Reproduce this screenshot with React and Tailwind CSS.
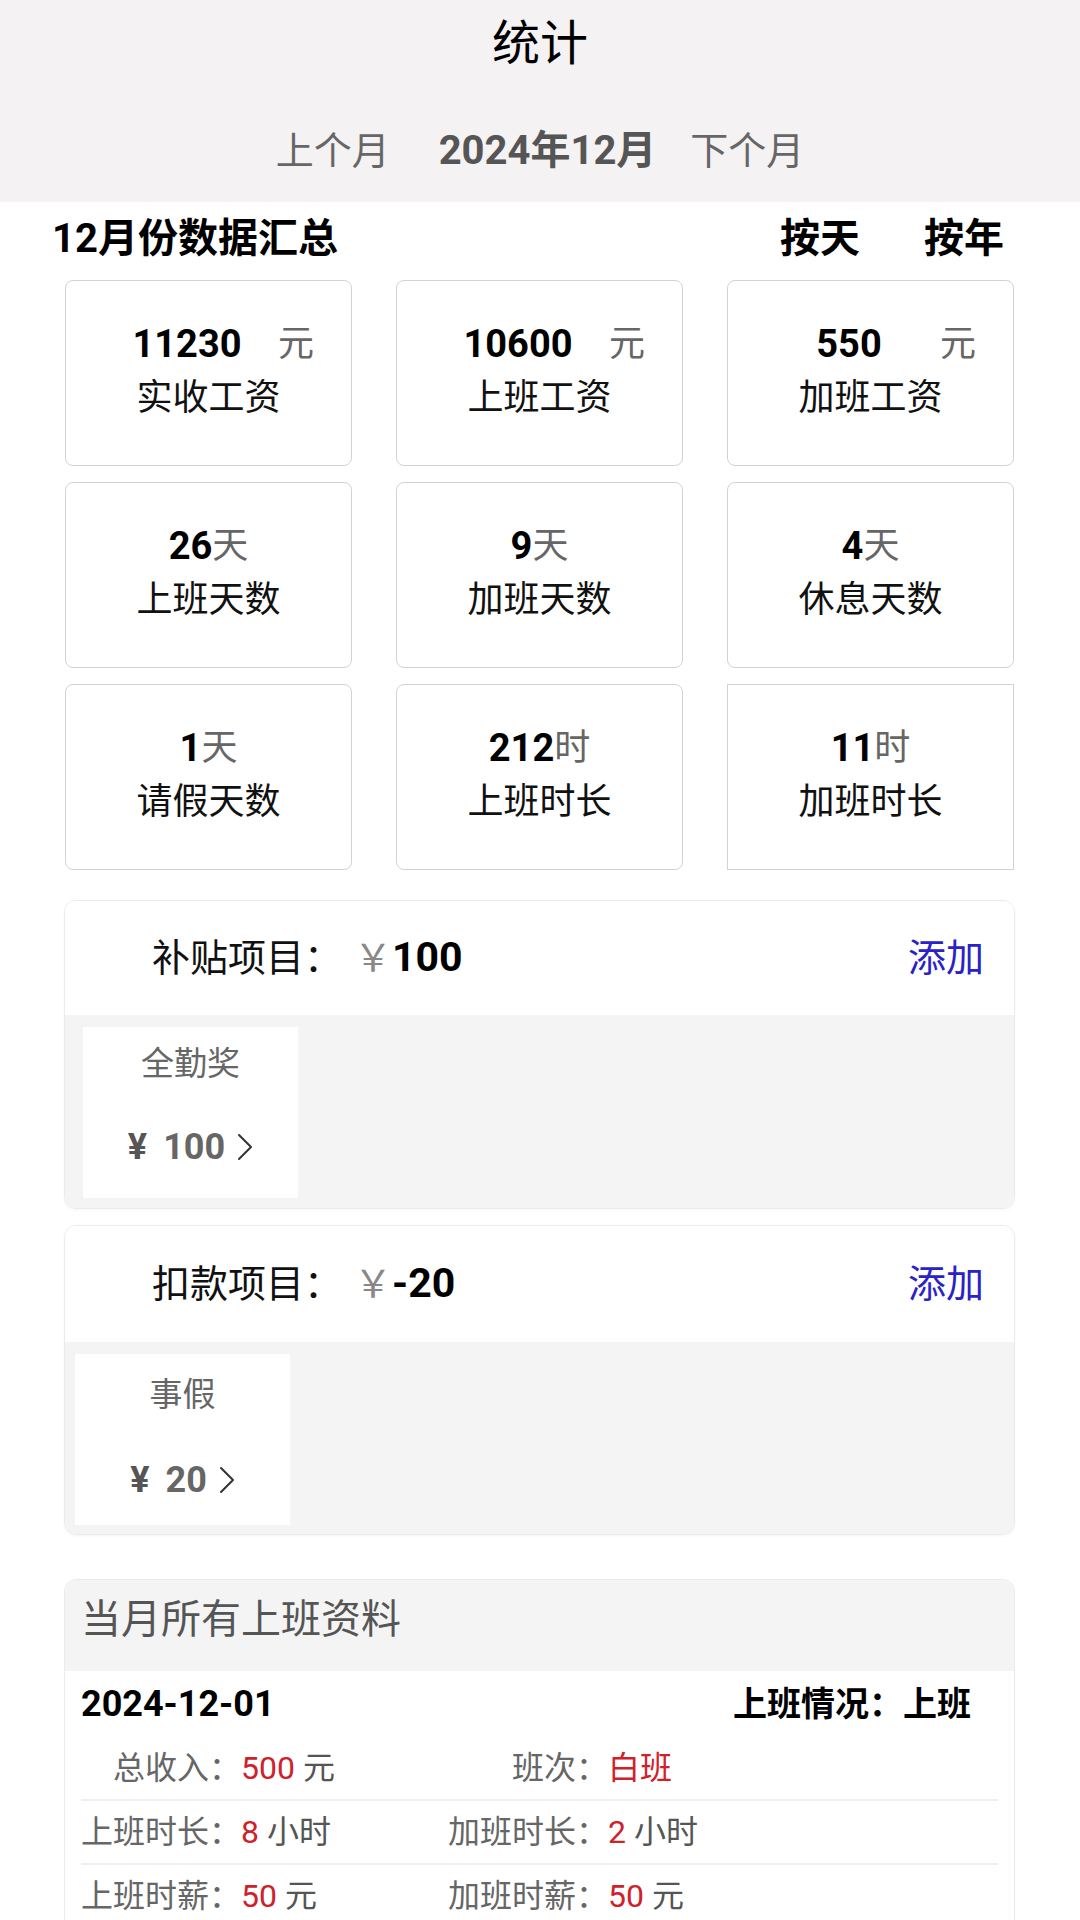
import React from "react";

const stats = [
  { value: "11230", unit: "元", label: "实收工资", money: true },
  { value: "10600", unit: "元", label: "上班工资", money: true },
  { value: "550", unit: "元", label: "加班工资", money: true },
  { value: "26", unit: "天", label: "上班天数" },
  { value: "9", unit: "天", label: "加班天数" },
  { value: "4", unit: "天", label: "休息天数" },
  { value: "1", unit: "天", label: "请假天数" },
  { value: "212", unit: "时", label: "上班时长" },
  { value: "11", unit: "时", label: "加班时长", square: true },
];

const details = [
  [
    { label: "总收入：", value: "500", unit: " 元" },
    { label: "班次：", value: "白班", unit: "" },
  ],
  [
    { label: "上班时长：", value: "8", unit: " 小时" },
    { label: "加班时长：", value: "2", unit: " 小时" },
  ],
  [
    { label: "上班时薪：", value: "50", unit: " 元" },
    { label: "加班时薪：", value: "50", unit: " 元" },
  ],
];

const StatCard = ({ item }) => (
  <div
    className={`h-[186px] border border-[#d2d2d2] bg-white flex flex-col justify-center ${
      item.square ? "rounded-none" : "rounded-[8px]"
    }`}
  >
    {item.money ? (
      <div className="flex items-center h-[50px] pl-[46px]">
        <span className="w-[150px] text-center text-[38px] font-bold text-black">{item.value}</span>
        <span className="ml-[16px] text-[36px] text-[#666]">{item.unit}</span>
      </div>
    ) : (
      <div className="flex items-center justify-center h-[50px]">
        <span className="text-[38px] font-bold text-black">{item.value}</span>
        <span className="text-[36px] text-[#666]">{item.unit}</span>
      </div>
    )}
    <div className="h-[58px] flex items-center justify-center text-[36px] text-[#111]">{item.label}</div>
  </div>
);

const Chevron = () => (
  <svg width="16" height="28" viewBox="0 0 16 28" fill="none" className="ml-[12px]">
    <polyline points="2,2 14,14 2,26" stroke="#333" strokeWidth="2" strokeLinecap="round" strokeLinejoin="round" />
  </svg>
);

const ItemPanel = ({ title, total, name, amount, mt, headH, bodyH, cardX, nameH, amountH }) => (
  <div className={`ml-[64px] w-[951px] ${mt} rounded-[12px] border border-[#ebebeb] overflow-hidden shadow-[0_1px_3px_rgba(0,0,0,0.04)]`}>
    <div className={`${headH} bg-white flex items-center justify-between pl-[87px] pr-[30px]`}>
      <div className="flex items-center">
        <span className="text-[38px] text-[#111]">{title}：</span>
        <span className="ml-[12px] text-[38px] text-[#888]">￥</span>
        <span className="text-[41px] font-bold text-black">{total}</span>
      </div>
      <span className="text-[38px] text-[#2a22c8]">添加</span>
    </div>
    <div className={`${bodyH} bg-[#f4f4f4] pt-[12px] ${cardX}`}>
      <div className="w-[215px] h-[171px] bg-white flex flex-col items-center">
        <div className={`${nameH} flex items-center text-[33px] text-[#666]`}>{name}</div>
        <div className={`${amountH} flex items-center text-[36px] font-bold`}>
          <span className="text-[#555]">¥</span>
          <span className="ml-[16px] text-[#666]">{amount}</span>
          <Chevron />
        </div>
      </div>
    </div>
  </div>
);

const App = () => {
  return (
    <div className="w-full min-h-screen bg-white font-['Roboto','Noto_Sans_CJK_SC',sans-serif] overflow-hidden">
      <div className="bg-[#f4f2f2] h-[202px]">
        <div className="h-[88px] flex items-center justify-center text-[48px] text-black">统计</div>
        <div className="h-[114px] pt-[12px] flex items-center justify-center">
          <span className="text-[38px] text-[#666]">上个月</span>
          <span className="ml-[49px] text-[40px] font-bold text-[#555]">2024年12月</span>
          <span className="ml-[34px] text-[38px] text-[#666]">下个月</span>
        </div>
      </div>

      <div className="h-[74px] flex items-center justify-between pl-[52px] pr-[76px] text-[40px] font-bold text-black">
        <span>12月份数据汇总</span>
        <div className="flex items-center gap-[64px]">
          <span>按天</span>
          <span>按年</span>
        </div>
      </div>

      <div className="mt-[4px] pl-[65px] pr-[66px] grid grid-cols-3 gap-x-[44px] gap-y-[16px]">
        {stats.map((s) => (
          <StatCard key={s.label} item={s} />
        ))}
      </div>

      <ItemPanel
        title="补贴项目"
        total="100"
        name="全勤奖"
        amount="100"
        mt="mt-[30px]"
        headH="h-[114px]"
        bodyH="h-[193px]"
        cardX="pl-[18px]"
        nameH="h-[74px]"
        amountH="h-[92px]"
      />
      <ItemPanel
        title="扣款项目"
        total="-20"
        name="事假"
        amount="20"
        mt="mt-[16px]"
        headH="h-[116px]"
        bodyH="h-[192px]"
        cardX="pl-[10px]"
        nameH="h-[82px]"
        amountH="h-[92px]"
      />

      <div className="ml-[64px] w-[951px] mt-[44px] rounded-t-[12px] border border-[#ebebeb] overflow-hidden pb-[40px]">
        <div className="h-[91px] bg-[#f4f4f4] flex items-center pl-[16px] pb-[12px] text-[40px] text-[#555]">
          当月所有上班资料
        </div>
        <div className="px-[16px]">
          <div className="h-[66px] flex items-center justify-between pr-[27px] font-bold text-black">
            <span className="text-[36px]">2024-12-01</span>
            <span className="text-[34px]">上班情况：上班</span>
          </div>
          {details.map((row, i) => (
            <div key={i} className="h-[64px] border-b-2 border-[#efefef] flex items-center text-[32px]">
              <div className="w-[367px] flex items-center">
                <span className="w-[160px] text-right text-[#666]">{row[0].label}</span>
                <span className="text-[#d0212b]">{row[0].value}</span>
                <span className="text-[#555] whitespace-pre">{row[0].unit}</span>
              </div>
              <div className="flex items-center">
                <span className="w-[160px] text-right text-[#666]">{row[1].label}</span>
                <span className="text-[#d0212b]">{row[1].value}</span>
                <span className="text-[#555] whitespace-pre">{row[1].unit}</span>
              </div>
            </div>
          ))}
        </div>
      </div>
    </div>
  );
};

export default App;
